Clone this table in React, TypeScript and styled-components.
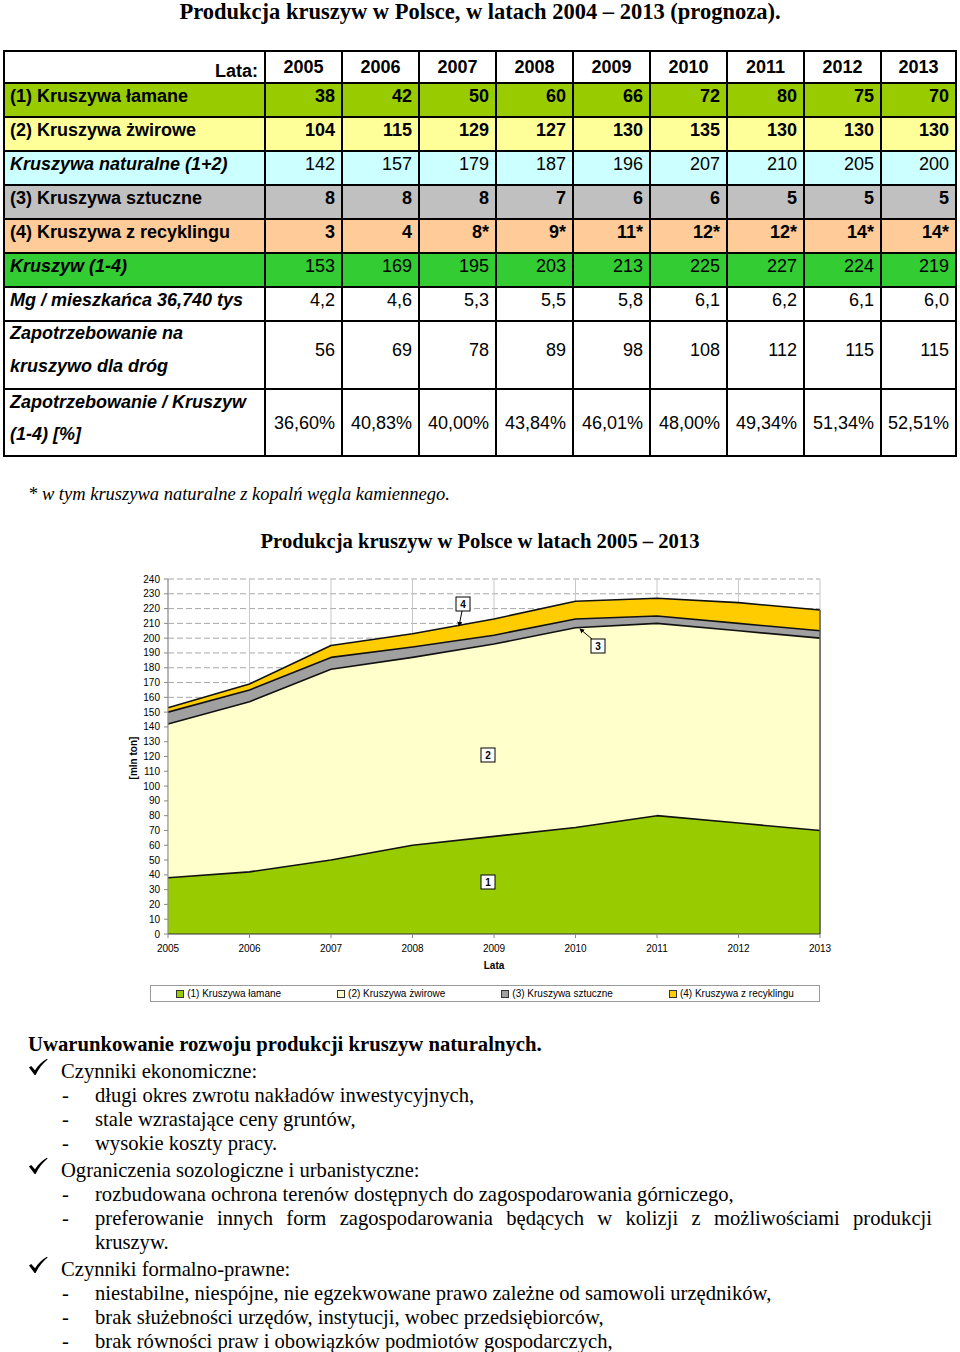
import React from 'react';
import styled, { createGlobalStyle } from 'styled-components';

const GlobalStyle = createGlobalStyle`
  html, body { margin: 0; padding: 0; background: #ffffff; }
  body { font-family: "Liberation Serif", "Times New Roman", serif; color: #000; }
`;

const Page = styled.div`
  width: 960px;
  height: 1352px;
  overflow: hidden;
`;

const Title = styled.h1`
  margin: 0;
  font: bold 22.5px/24px "Liberation Serif", "Times New Roman", serif;
  text-align: center;
`;

const Table = styled.table`
  margin: 26px 0 0 3px;
  width: 952px;
  border-collapse: collapse;
  table-layout: fixed;
  font-family: "Liberation Sans", Arial, sans-serif;
  font-size: 18px;
  border: 2px solid #000;
`;

const Row = styled.tr<{ $h: number; $bg: string }>`
  height: ${(p) => p.$h}px;
  background: ${(p) => p.$bg};
`;

const Cell = styled.td<{
  $bold?: boolean;
  $italic?: boolean;
  $align?: string;
  $lh?: number;
  $up?: number;
  $down?: number;
}>`
  border: 2px solid #000;
  padding: ${(p) => p.$down || 0}px 6px ${(p) => p.$up || 0}px 6px;
  font-weight: ${(p) => (p.$bold ? 'bold' : 'normal')};
  font-style: ${(p) => (p.$italic ? 'italic' : 'normal')};
  text-align: ${(p) => p.$align || 'right'};
  line-height: ${(p) => p.$lh || 22}px;
  vertical-align: middle;
  white-space: nowrap;
`;

const LabelCell = styled(Cell)`
  padding-left: 5px;
  white-space: normal;
`;

const LabelText = styled.span<{ $lift: number }>`
  display: block;
  margin: ${(p) => -p.$lift}px 0 ${(p) => p.$lift}px;
`;

const Footnote = styled.p`
  margin: 27px 0 0 28px;
  font: italic 18.5px/20px "Liberation Serif", "Times New Roman", serif;
`;

const ChartTitle = styled.h2`
  margin: 25px 0 0 0;
  font: bold 20.6px/24px "Liberation Serif", "Times New Roman", serif;
  text-align: center;
`;

const ChartSvg = styled.svg`
  display: block;
  font-family: "Liberation Sans", Arial, sans-serif;
`;

const Legend = styled.div`
  margin: 4px 0 0 150px;
  width: 668px;
  height: 15px;
  border: 1px solid #9a9a9a;
  display: flex;
  justify-content: center;
  align-items: center;
  gap: 56px;
  font: 10px/15px "Liberation Sans", Arial, sans-serif;
`;

const LegendItem = styled.span`
  display: flex;
  align-items: center;
  gap: 3px;
`;

const Swatch = styled.span<{ $c: string }>`
  display: inline-block;
  width: 6px;
  height: 6px;
  border: 1px solid #333;
  background: ${(p) => p.$c};
`;

const Section = styled.section`
  margin-top: 30px;
  padding: 0 28px;
  font: 20.6px/24px "Liberation Serif", "Times New Roman", serif;
`;

const Heading = styled.h3`
  margin: 0;
  font: bold 20.7px/24px "Liberation Serif", "Times New Roman", serif;
`;

const CheckItem = styled.div`
  display: grid;
  grid-template-columns: 33px 1fr;
  margin-top: 3px;
`;

const CheckMark = styled.svg`
  display: block;
  margin-top: -1px;
`;

const SubList = styled.ul`
  list-style: none;
  margin: 0;
  padding: 0 0 0 34px;
`;

const SubItem = styled.li`
  display: grid;
  grid-template-columns: 33px 1fr;
`;

const SubText = styled.span`
  text-align: justify;
`;

type RowDef = {
  label: React.ReactNode;
  values: string[];
  bg: string;
  h: number;
  labelItalic?: boolean;
  numBold: boolean;
  lh?: number;
  lift: number;
  numUp: number;
};

const years = ['2005', '2006', '2007', '2008', '2009', '2010', '2011', '2012', '2013'];
const colWidths = [77, 77, 77, 77, 77, 77, 77, 77, 75];

const rows: RowDef[] = [
  { label: '(1) Kruszywa łamane', values: ['38', '42', '50', '60', '66', '72', '80', '75', '70'], bg: '#99cc00', h: 34, numBold: true, lift: 4, numUp: 8 },
  { label: '(2) Kruszywa żwirowe', values: ['104', '115', '129', '127', '130', '135', '130', '130', '130'], bg: '#ffff99', h: 34, numBold: true, lift: 4, numUp: 8 },
  { label: 'Kruszywa naturalne (1+2)', values: ['142', '157', '179', '187', '196', '207', '210', '205', '200'], bg: '#ccffff', h: 34, labelItalic: true, numBold: false, lift: 4, numUp: 8 },
  { label: '(3) Kruszywa sztuczne', values: ['8', '8', '8', '7', '6', '6', '5', '5', '5'], bg: '#c0c0c0', h: 34, numBold: true, lift: 4, numUp: 8 },
  { label: '(4) Kruszywa z recyklingu', values: ['3', '4', '8*', '9*', '11*', '12*', '12*', '14*', '14*'], bg: '#ffcc99', h: 34, numBold: true, lift: 4, numUp: 8 },
  { label: 'Kruszyw (1-4)', values: ['153', '169', '195', '203', '213', '225', '227', '224', '219'], bg: '#33cc33', h: 34, labelItalic: true, numBold: false, lift: 4, numUp: 8 },
  { label: 'Mg / mieszkańca  36,740 tys', values: ['4,2', '4,6', '5,3', '5,5', '5,8', '6,1', '6,2', '6,1', '6,0'], bg: '#ffffff', h: 34, labelItalic: true, numBold: false, lift: 4, numUp: 8 },
  { label: 'Zapotrzebowanie na kruszywo dla dróg', values: ['56', '69', '78', '89', '98', '108', '112', '115', '115'], bg: '#ffffff', h: 66, labelItalic: true, numBold: false, lh: 33, lift: 5, numUp: 10 },
  { label: 'Zapotrzebowanie / Kruszyw (1-4) [%]', values: ['36,60%', '40,83%', '40,00%', '43,84%', '46,01%', '48,00%', '49,34%', '51,34%', '52,51%'], bg: '#ffffff', h: 67, labelItalic: true, numBold: false, lh: 32, lift: 5, numUp: 0 },
];

const s1 = [38, 42, 50, 60, 66, 72, 80, 75, 70];
const s2 = [104, 115, 129, 127, 130, 135, 130, 130, 130];
const s3 = [8, 8, 8, 7, 6, 6, 5, 5, 5];
const s4 = [3, 4, 8, 9, 11, 12, 12, 14, 14];
const c1 = s1;
const c2 = s1.map((v, i) => v + s2[i]);
const c3 = c2.map((v, i) => v + s3[i]);
const c4 = c3.map((v, i) => v + s4[i]);

const X0 = 168;
const X1 = 820;
const Y0 = 933;
const YT = 578;
const xs = (i: number) => X0 + (i * (X1 - X0)) / 8;
const ys = (v: number) => Y0 - (v * (Y0 - YT)) / 240;

const pts = (arr: number[]) => arr.map((v, i) => `${xs(i)},${ys(v)}`).join(' ');
const area = (arr: number[]) => `${X0},${Y0} ${pts(arr)} ${X1},${Y0}`;

const LabelBox: React.FC<{ x: number; y: number; t: string }> = ({ x, y, t }) => (
  <g>
    <rect x={x - 7} y={y - 7} width={14} height={14} fill="#fff" stroke="#000" strokeWidth={1} />
    <text x={x} y={y + 4} textAnchor="middle" fontSize={10} fontWeight="bold">{t}</text>
  </g>
);

const Chart: React.FC = () => {
  const ticks = Array.from({ length: 25 }, (_, i) => i * 10);
  return (
    <ChartSvg width={960} height={428} viewBox="0 552 960 428">
      <defs>
        <marker id="arr" viewBox="0 0 6 6" refX="5" refY="3" markerWidth="5" markerHeight="5" orient="auto">
          <path d="M0,0 L6,3 L0,6 Z" fill="#000" />
        </marker>
      </defs>
      {ticks.slice(1).map((t) => (
        <line key={`h${t}`} x1={X0} x2={X1} y1={ys(t)} y2={ys(t)} stroke="#a8a8a8" strokeWidth={1} strokeDasharray="6 3" />
      ))}
      {years.map((_, i) => (
        <line key={`v${i}`} x1={xs(i)} x2={xs(i)} y1={YT} y2={Y0} stroke="#c8c8c8" strokeWidth={1} />
      ))}
      <polygon points={area(c4)} fill="#ffcc00" />
      <polygon points={area(c3)} fill="#a0a0a0" />
      <polygon points={area(c2)} fill="#ffffcc" />
      <polygon points={area(c1)} fill="#99cc00" />
      {[c4, c3, c2, c1].map((c, k) => (
        <polyline key={`l${k}`} points={pts(c)} fill="none" stroke="#111" strokeWidth={1.6} strokeLinejoin="round" />
      ))}
      <line x1={X1} x2={X1} y1={ys(c4[8])} y2={Y0} stroke="#555" strokeWidth={1.5} />
      <line x1={X0} x2={X0} y1={YT} y2={Y0} stroke="#888" strokeWidth={1} />
      {ticks.map((t) => (
        <g key={`yt${t}`}>
          <line x1={X0 - 4} x2={X0} y1={ys(t)} y2={ys(t)} stroke="#888" strokeWidth={1} />
          <text x={160} y={ys(t) + 3.5} textAnchor="end" fontSize={10} fill="#000">{t}</text>
        </g>
      ))}
      <line x1={X0} x2={X1} y1={Y0} y2={Y0} stroke="#333" strokeWidth={1} />
      {years.map((y, i) => (
        <g key={`xt${y}`}>
          <line x1={xs(i)} x2={xs(i)} y1={Y0} y2={Y0 + 4} stroke="#888" strokeWidth={1} />
          <text x={xs(i)} y={951} textAnchor="middle" fontSize={10}>{y}</text>
        </g>
      ))}
      <text x={494} y={968} textAnchor="middle" fontSize={10} fontWeight="bold">Lata</text>
      <text x={0} y={0} textAnchor="middle" fontSize={10} fontWeight="bold" transform="translate(137 757) rotate(-90)">[mln ton]</text>
      <line x1={462} y1={610} x2={459} y2={625} stroke="#000" strokeWidth={1} markerEnd="url(#arr)" />
      <LabelBox x={463} y={603} t="4" />
      <line x1={592} y1={638} x2={580} y2={628} stroke="#000" strokeWidth={1} markerEnd="url(#arr)" />
      <LabelBox x={598} y={645} t="3" />
      <LabelBox x={488} y={754} t="2" />
      <LabelBox x={488} y={881} t="1" />
    </ChartSvg>
  );
};

const Check: React.FC = () => (
  <CheckMark width={20} height={18} viewBox="0 0 20 18">
    <path d="M1,9.5 L3.2,8 L7,12.2 C10,7.5 14,3.5 19,0.8 L19.6,1.4 C14.8,5.2 10.6,10.5 7.6,17 L6.6,17 Z" fill="#000" />
  </CheckMark>
);

type Group = { head: string; items: string[] };

const groups: Group[] = [
  {
    head: 'Czynniki ekonomiczne:',
    items: ['długi okres zwrotu nakładów inwestycyjnych,', 'stale wzrastające ceny gruntów,', 'wysokie koszty pracy.'],
  },
  {
    head: 'Ograniczenia sozologiczne i urbanistyczne:',
    items: [
      'rozbudowana ochrona terenów dostępnych do zagospodarowania górniczego,',
      'preferowanie innych form zagospodarowania będących w kolizji z możliwościami produkcji kruszyw.',
    ],
  },
  {
    head: 'Czynniki formalno-prawne:',
    items: [
      'niestabilne, niespójne, nie egzekwowane prawo zależne od samowoli urzędników,',
      'brak służebności urzędów, instytucji, wobec przedsiębiorców,',
      'brak równości praw i obowiązków podmiotów gospodarczych,',
    ],
  },
];

const legendItems = [
  { c: '#99cc00', t: '(1) Kruszywa łamane' },
  { c: '#ffffcc', t: '(2) Kruszywa żwirowe' },
  { c: '#a0a0a0', t: '(3) Kruszywa sztuczne' },
  { c: '#ffcc00', t: '(4) Kruszywa z recyklingu' },
];

export default function App() {
  return (
    <Page>
      <GlobalStyle />
      <Title>Produkcja kruszyw w Polsce, w latach 2004 – 2013 (prognoza).</Title>
      <Table>
        <colgroup>
          <col style={{ width: 261 }} />
          {years.map((y, i) => (
            <col key={y} style={{ width: colWidths[i] }} />
          ))}
        </colgroup>
        <tbody>
          <Row $h={32} $bg="#ffffff">
            <Cell $bold $align="right" $down={8}>Lata:</Cell>
            {years.map((y) => (
              <Cell key={y} $bold $align="center">{y}</Cell>
            ))}
          </Row>
          {rows.map((r, i) => (
            <Row key={i} $h={r.h} $bg={r.bg}>
              <LabelCell $bold $italic={r.labelItalic} $align="left" $lh={r.lh}>
                <LabelText $lift={r.lift}>{r.label}</LabelText>
              </LabelCell>
              {r.values.map((v, j) => (
                <Cell key={j} $bold={r.numBold} $up={r.numUp}>{v}</Cell>
              ))}
            </Row>
          ))}
        </tbody>
      </Table>
      <Footnote>* w tym kruszywa naturalne z kopalń węgla kamiennego.</Footnote>
      <ChartTitle>Produkcja kruszyw w Polsce w latach 2005 – 2013</ChartTitle>
      <Chart />
      <Legend>
        {legendItems.map((l) => (
          <LegendItem key={l.t}>
            <Swatch $c={l.c} />
            {l.t}
          </LegendItem>
        ))}
      </Legend>
      <Section>
        <Heading>Uwarunkowanie rozwoju produkcji kruszyw naturalnych.</Heading>
        {groups.map((g) => (
          <React.Fragment key={g.head}>
            <CheckItem>
              <Check />
              <span>{g.head}</span>
            </CheckItem>
            <SubList>
              {g.items.map((it) => (
                <SubItem key={it}>
                  <span>-</span>
                  <SubText>{it}</SubText>
                </SubItem>
              ))}
            </SubList>
          </React.Fragment>
        ))}
      </Section>
    </Page>
  );
}
